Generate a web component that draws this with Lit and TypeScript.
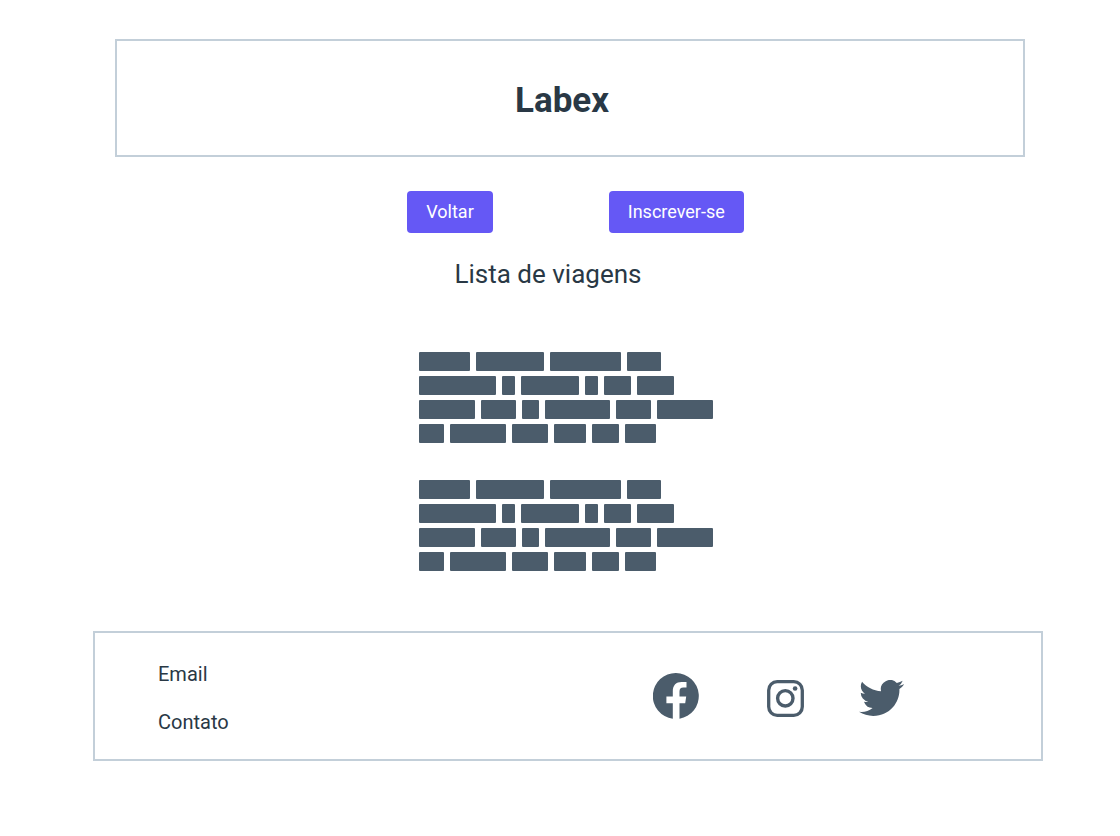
import { LitElement, html, css } from "lit";
import { customElement } from "lit/decorators.js";

// Word widths of one placeholder paragraph, line by line.
const PARAGRAPH = [
  [51, 68, 71, 34],
  [77, 13, 58, 13, 27, 37],
  [56, 35, 17, 65, 35, 56],
  [25, 56, 36, 32, 27, 31],
];

@customElement("trip-placeholder")
export class TripPlaceholder extends LitElement {
  static styles = css`
    :host {
      display: flex;
      flex-direction: column;
      gap: 5px;
    }
    .line {
      display: flex;
      gap: 6px;
    }
    .word {
      height: 19px;
      border-radius: 1px;
      background: #4b5c6b;
    }
  `;

  render() {
    return PARAGRAPH.map(
      (line) => html`<div class="line">
        ${line.map((w) => html`<span class="word" style="width:${w}px"></span>`)}
      </div>`
    );
  }
}

@customElement("app-root")
export class AppRoot extends LitElement {
  static styles = css`
    :host {
      display: block;
      box-sizing: border-box;
      min-height: 100vh;
      padding: 39px 77px 40px 93px;
      background: #fff;
      color: #293845;
      font-family: Roboto, "Liberation Sans", sans-serif;
    }
    .header {
      margin: 0 18px 0 22px;
      padding: 39px 16px 33px 0;
      border: 2px solid #c3cfd9;
      text-align: center;
    }
    h1 {
      margin: 0;
      font-size: 35px;
      line-height: 42px;
      font-weight: 700;
    }
    .actions {
      display: flex;
      justify-content: center;
      gap: 116px;
      margin-top: 34px;
      padding-left: 15px;
    }
    button {
      height: 42px;
      padding: 0 19px;
      border: 0;
      border-radius: 4px;
      background: #6558f5;
      color: #fff;
      font: 400 18px/42px Roboto, "Liberation Sans", sans-serif;
      cursor: pointer;
    }
    h2 {
      margin: 25px 0 0;
      padding-right: 40px;
      font-size: 26px;
      line-height: 32px;
      font-weight: 400;
      text-align: center;
    }
    .trips {
      display: flex;
      flex-direction: column;
      align-items: center;
      gap: 37px;
      margin-top: 62px;
      padding-right: 4px;
    }
    .footer {
      display: flex;
      justify-content: space-between;
      align-items: center;
      margin-top: 60px;
      padding: 29px 137px 25px 63px;
      border: 2px solid #c3cfd9;
    }
    .links {
      display: flex;
      flex-direction: column;
      gap: 24px;
    }
    .links a {
      color: inherit;
      font-size: 20px;
      line-height: 24px;
      text-decoration: none;
    }
    .social {
      display: flex;
      align-items: center;
      margin-bottom: 4px;
      color: #4b5c6b;
    }
    .social a {
      display: block;
      color: inherit;
    }
    svg {
      display: block;
      fill: currentColor;
    }
    .instagram {
      margin: 5px 55px 0 67px;
    }
    .twitter {
      margin-top: 4px;
    }
  `;

  render() {
    return html`
      <header class="header"><h1>Labex</h1></header>
      <main>
        <div class="actions">
          <button type="button">Voltar</button>
          <button type="button">Inscrever-se</button>
        </div>
        <h2>Lista de viagens</h2>
        <div class="trips">
          <trip-placeholder></trip-placeholder>
          <trip-placeholder></trip-placeholder>
        </div>
      </main>
      <footer class="footer">
        <nav class="links">
          <a href="#email">Email</a>
          <a href="#contato">Contato</a>
        </nav>
        <div class="social">
          <a href="#facebook" aria-label="Facebook">
            <svg width="47" height="46" viewBox="0 0 47 46">
              <path d="M23 0a23 23 0 0 0-3.2 45.8V30.2H13.4V23.5H19.8V18.2C19.8 12 23.2 8.9 28.600 8.9H33.5V14.5H30.5C27.5 14.5 26.5 16 26.5 18.500V23.500H33.200L32.200 30.200H26.500V45.700A23 23 0 0 0 23 0z" />
            </svg>
          </a>
          <a class="instagram" href="#instagram" aria-label="Instagram">
            <svg width="37" height="37" viewBox="0 0 37 37">
              <rect x="1.7" y="1.7" width="33.6" height="33.6" rx="8.5" fill="none" stroke="currentColor" stroke-width="3.3" />
              <circle cx="18.3" cy="18.3" r="7.7" fill="none" stroke="currentColor" stroke-width="3.4" />
              <circle cx="28.1" cy="8.5" r="2.3" />
            </svg>
          </a>
          <a class="twitter" href="#twitter" aria-label="Twitter">
            <svg width="45" height="36" viewBox="0 2.2 24 19.6" preserveAspectRatio="none">
              <path d="M23.950 4.570a10 10 0 0 1-2.820.770 4.960 4.960 0 0 0 2.160-2.720c-.95.550-2 .950-3.120 1.180a4.920 4.920 0 0 0-8.390 4.480C7.690 8.100 4.070 6.130 1.640 3.160a4.820 4.820 0 0 0-.670 2.480c0 1.710.870 3.210 2.190 4.100a4.900 4.900 0 0 1-2.230-.620v.060a4.920 4.920 0 0 0 3.950 4.830 5 5 0 0 1-2.210.080 4.940 4.940 0 0 0 4.600 3.420A9.870 9.870 0 0 1 0 19.540a13.990 13.990 0 0 0 7.560 2.210c9.050 0 14-7.500 14-13.980 0-.21 0-.42-.02-.63a9.940 9.940 0 0 0 2.460-2.550z" />
            </svg>
          </a>
        </div>
      </footer>
    `;
  }
}
